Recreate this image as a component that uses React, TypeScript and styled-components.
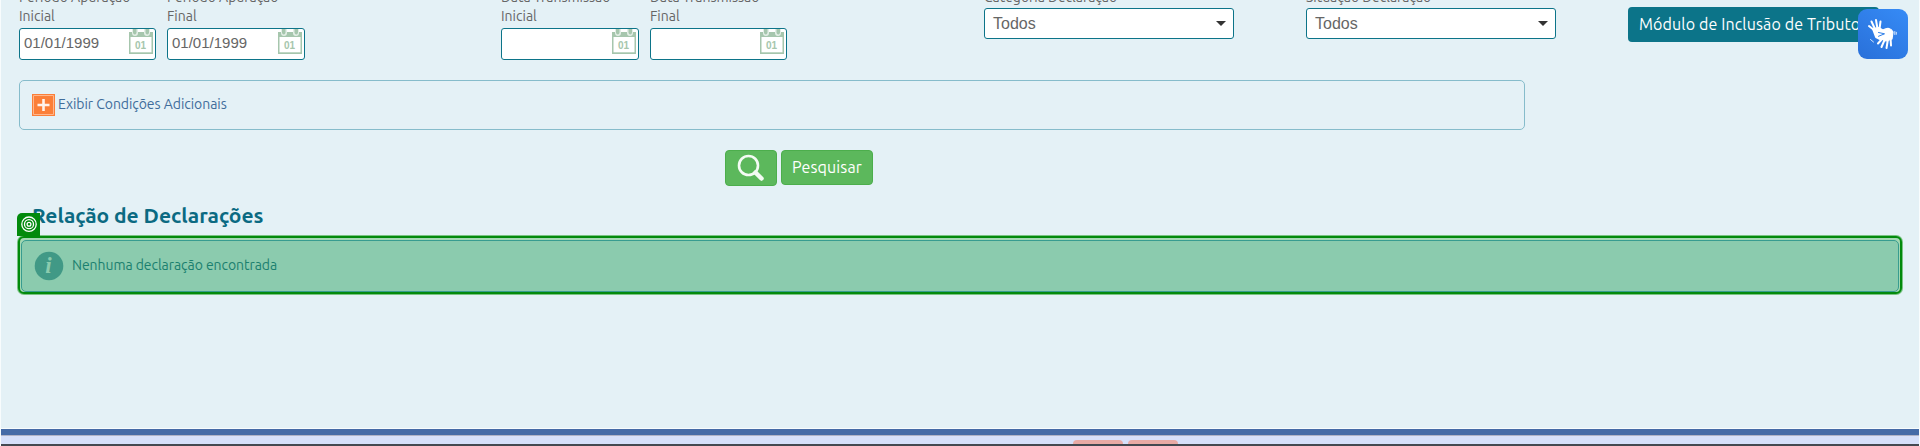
import React from "react";
import styled, { createGlobalStyle } from "styled-components";

const Global = createGlobalStyle`
  * { box-sizing: border-box; }
  body { margin: 0; background: #fff; overflow: hidden; }
`;

const Page = styled.div`
  width: 1920px;
  height: 446px;
  padding: 0 1px;
  overflow: hidden;
  display: flex;
  flex-direction: column;
  background: #f8fcfd;
  font-family: Ubuntu, "Noto Sans", sans-serif;
  font-size: 14px;
  color: #666;
`;

const Content = styled.main`
  flex: none;
  height: 428px;
  padding-left: 18px;
  background: #e4f1f6;
  overflow: hidden;
`;

const Filters = styled.div`
  display: flex;
  align-items: flex-start;
  height: 80px;
`;

const Field = styled.div<{ $w: number; $gap: number }>`
  width: ${(p) => p.$w}px;
  margin-left: ${(p) => p.$gap}px;
  flex: none;
`;

const Label = styled.label<{ $h: number }>`
  display: flex;
  flex-direction: column;
  height: ${(p) => p.$h}px;
  white-space: nowrap;
  line-height: 20px;
  letter-spacing: -0.03px;

  span { flex: none; margin-top: -13px; }
  span + span { margin-top: -1px; letter-spacing: 0; }
`;

const DateBox = styled.div`
  display: flex;
  justify-content: space-between;
  height: 32px;
  padding: 0 2px 0 4px;
  border: 1px solid #0c7489;
  border-radius: 3px;
  background: #fff;
  font: 15px/28px "Liberation Sans", sans-serif;
  svg { display: block; }
`;

const SelectBox = styled.div`
  display: flex;
  align-items: center;
  justify-content: space-between;
  height: 31px;
  padding: 0 7px 0 8px;
  border: 1px solid #0c7489;
  border-radius: 3px;
  background: #fff;
  font: 16px/29px "Liberation Sans", sans-serif;
`;

const Caret = styled.i`
  border: 5px solid transparent;
  border-top-color: #333;
  border-bottom: 0;
`;

const ModuleButton = styled.button`
  flex: none;
  width: 251px;
  height: 35px;
  margin: 7px 0 0 72px;
  padding: 0 0 1px 11px;
  border: 0;
  border-radius: 4px;
  background: #0c7489;
  color: #fff;
  font: 400 16px/34px Ubuntu, "Noto Sans", sans-serif;
  letter-spacing: 0.14px;
  text-align: left;
  white-space: nowrap;
`;

const Extra = styled.section`
  display: flex;
  align-items: flex-start;
  width: 1506px;
  height: 50px;
  padding: 13px 12px;
  border: 1px solid #86bccb;
  border-radius: 5px;
  color: #3f6d9b;
  line-height: 21px;
  letter-spacing: -0.05px;
  svg { display: block; margin-right: 3px; }
`;

const Actions = styled.div`
  display: flex;
  gap: 4px;
  height: 56px;
  padding: 20px 0 0 706px;
`;

const GreenButton = styled.button<{ $w: number; $h: number }>`
  display: flex;
  align-items: center;
  justify-content: center;
  width: ${(p) => p.$w}px;
  height: ${(p) => p.$h}px;
  padding: 0;
  border: 1px solid #4cae4c;
  border-radius: 4px;
  background: #5cb85c;
  color: #fff;
  font: 400 16px/33px Ubuntu, "Noto Sans", sans-serif;
  letter-spacing: 0.14px;
`;

const Heading = styled.h2`
  height: 50px;
  margin: 0;
  padding: 15px 0 0 13px;
  color: #0b6a82;
  font-size: 21px;
  font-weight: 700;
  line-height: 28px;
  letter-spacing: -0.04px;
`;

const Highlight = styled.div`
  position: relative;
  width: 1884px;
  height: 58px;
  margin-left: -1px;
  padding: 2px 1px 0;
  border: 2px solid #028a0c;
  border-radius: 6px;
  background: #a3d7b3;
  box-shadow: 0 0 0 1px #79c383;
`;

const Notice = styled.div`
  display: flex;
  align-items: center;
  height: 52px;
  padding-left: 12px;
  border: 1px solid #389c90;
  border-radius: 5px;
  background: #8bcbae;
  color: #1b806f;
  svg { margin-right: 8px; }
`;

const NoticeText = styled.span`
  letter-spacing: -0.06px;
  margin-top: -3px;
`;

const Marker = styled.span`
  position: absolute;
  left: -3px;
  top: -25px;
  width: 23px;
  height: 23px;
  border-radius: 5px 0 0 0;
  background: #028a0c;
  svg { display: block; }
`;

const Accessibility = styled.button`
  position: absolute;
  left: 1858px;
  top: 9px;
  width: 50px;
  height: 50px;
  padding: 0;
  border: 0;
  border-radius: 9px;
  background: linear-gradient(35deg, #2970d9, #368bf6);
`;

const Footer = styled.footer`
  flex: none;
  height: 17px;
  margin-top: 1px;
  border-top: 6px solid #456ba7;
  background: #d6e0fa;
  box-shadow: inset 0 1px #b0b3c6;
  display: flex;
  flex-wrap: wrap;
  gap: 0 5px;
  padding: 5px 0 0 1072px;
`;

const FooterTab = styled.span`
  width: 50px;
  height: 4px;
  border-radius: 5px 5px 0 0;
  background: #e9aaa5;
`;

const FooterEdge = styled.div`
  flex: none;
  width: 1918px;
  height: 2px;
  margin-left: -1072px;
  background: #444951;
`;

const Calendar = () => (
  <svg width="24" height="26" viewBox="0 0 24 26">
    <path d="M0 3h24v22H0z" fill="#a6c6ad" />
    <path d="M1.500 8h21v15.300h-21z" fill="#fff" />
    <path d="M3 0h6v4q0 3-3 3T3 4zM15 0h6v4q0 3-3 3t-3-3z" fill="#e3eee6" />
    <path d="M4 0h3.500v4q-1.700 3-3.500 0zM16.500 0h3.500v4q-1.700 3-3.500 0z" fill="#a6c6ad" />
    <text x="11.500" y="20" textAnchor="middle" fontFamily="Liberation Sans, sans-serif" fontWeight="700" fontSize="10" fill="#a6c6ad">01</text>
  </svg>
);

const Plus = () => (
  <svg width="23" height="22" viewBox="0 0 23 22">
    <path d="M0 0h23v22H0z" fill="#fb7f38" />
    <path d="M1.500 1.500h20v19h-20z" fill="none" stroke="#ffb78c" />
    <path d="M11.500 5v12M5.500 11h12" stroke="#fff3eb" strokeWidth="2.600" />
  </svg>
);

const Magnifier = () => (
  <svg width="28" height="28" viewBox="0 0 28 28" fill="none" stroke="#f4fbf4">
    <circle cx="11.500" cy="11.500" r="9.500" strokeWidth="2.600" />
    <path d="M18.500 18.500l6 6" strokeWidth="4.500" strokeLinecap="round" />
  </svg>
);

const Info = () => (
  <svg width="30" height="30" viewBox="0 0 30 30">
    <circle cx="15" cy="15" r="14.300" fill="#419986" />
    <text x="14.500" y="22" textAnchor="middle" fontFamily="Liberation Serif, serif" fontStyle="italic" fontWeight="700" fontSize="23" fill="#8bcbae">i</text>
  </svg>
);

const Target = () => (
  <svg width="23" height="23" viewBox="0 0 23 23" fill="none" stroke="#fff" strokeWidth="1.300">
    <circle cx="12" cy="11.200" r="7.200" />
    <circle cx="12" cy="11.200" r="4.500" />
    <circle cx="12" cy="11.200" r="1.900" />
  </svg>
);

const Hands = () => (
  <svg width="50" height="50" viewBox="0 0 50 50" fill="none" stroke="#fff" strokeLinecap="round" strokeLinejoin="round">
    <path d="M15 20l6-1 5 3-4 8-4-2z" fill="#fff" strokeWidth="2" />
    <path d="M16 21l-5-4M17 20l-3.500-7.500M19.500 20l-1.500-9M21.500 20l1-7.500" strokeWidth="2" />
    <path d="M25 21q7-4 10 2l-1 7-6 2-7-3 6-4-7-1q1-3 5-3z" fill="#fff" strokeWidth="1.200" />
    <path d="M25 29l-5 5.500M27 30l-3.500 8M30 30l-1.500 9M32.500 28.500l.5 8" strokeWidth="2" />
    <path d="M20.500 23.500l6 1.300-6 2.500" stroke="#2f7fe8" strokeWidth="1" />
    <path d="M12.500 30.500l3 2.500M36.800 22.500v3M38.300 23.300v2" strokeWidth=".8" />
  </svg>
);

type DateFieldProps = { w: number; gap: number; group: string; name: string; value?: string };

const DateField = ({ w, gap, group, name, value }: DateFieldProps) => (
  <Field $w={w} $gap={gap}>
    <Label $h={28}><span>{group}</span><span>{name}</span></Label>
    <DateBox><span>{value}</span><Calendar /></DateBox>
  </Field>
);

const SelectField = ({ gap, name }: { gap: number; name: string }) => (
  <Field $w={250} $gap={gap}>
    <Label $h={8}><span>{name}</span></Label>
    <SelectBox>Todos<Caret /></SelectBox>
  </Field>
);

export default function App() {
  return (
    <Page>
      <Global />
      <Content>
        <Filters>
          <DateField w={137} gap={0} group="Período Apuração" name="Inicial" value="01/01/1999" />
          <DateField w={138} gap={11} group="Período Apuração" name="Final" value="01/01/1999" />
          <DateField w={138} gap={196} group="Data Transmissão" name="Inicial" />
          <DateField w={137} gap={11} group="Data Transmissão" name="Final" />
          <SelectField gap={197} name="Categoria Declaração" />
          <SelectField gap={72} name="Situação Declaração" />
          <ModuleButton>Módulo de Inclusão de Tributos</ModuleButton>
        </Filters>
        <Extra><Plus />Exibir Condições Adicionais</Extra>
        <Actions>
          <GreenButton $w={52} $h={36} aria-label="Pesquisar"><Magnifier /></GreenButton>
          <GreenButton $w={92} $h={35}>Pesquisar</GreenButton>
        </Actions>
        <Heading>Relação de Declarações</Heading>
        <Highlight>
          <Marker><Target /></Marker>
          <Notice><Info /><NoticeText>Nenhuma declaração encontrada</NoticeText></Notice>
        </Highlight>
      </Content>
      <Footer>
        <FooterTab />
        <FooterTab />
        <FooterEdge />
      </Footer>
      <Accessibility aria-label="Libras"><Hands /></Accessibility>
    </Page>
  );
}
